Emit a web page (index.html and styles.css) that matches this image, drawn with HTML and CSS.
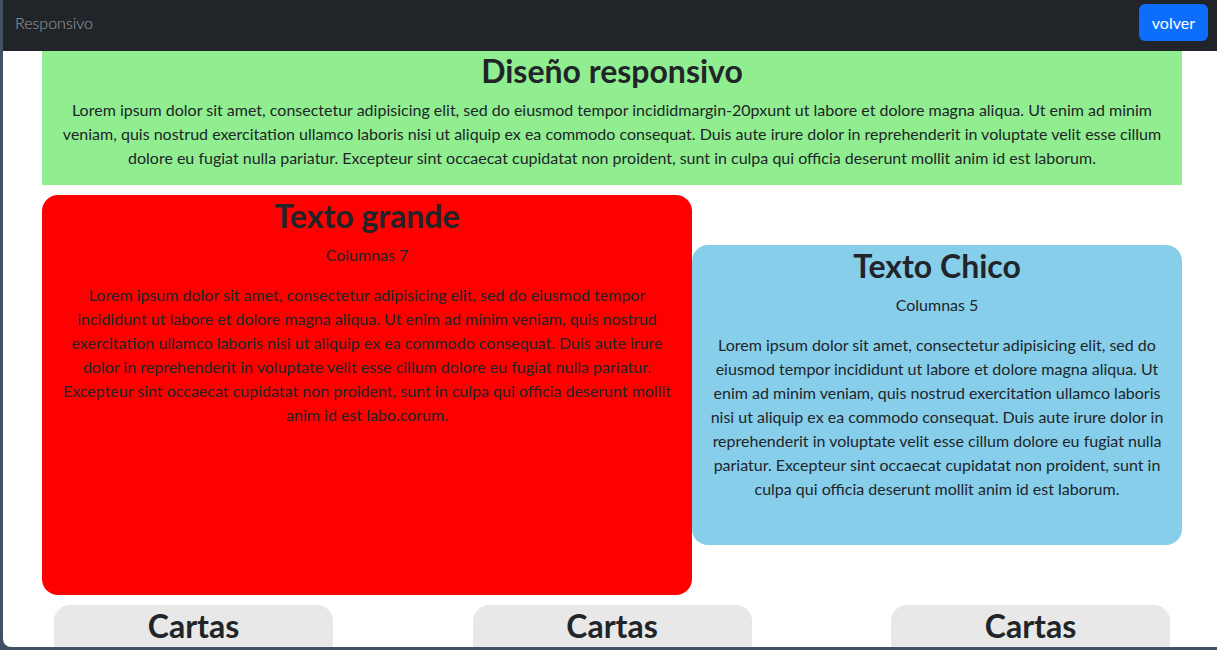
FILE: index.html
```html
<!DOCTYPE html>
<html lang="es">
<head>
    <meta charset="UTF-8">
    <meta name="viewport" content="width=device-width, initial-scale=1.0">
    <title>Responsivo</title>
    <link rel="stylesheet" href="styles.css">
</head>
<body>
    <div class="frame">
        <div class="page">
            <nav class="navbar">
                <span class="brand">Responsivo</span>
                <button class="btn-volver">volver</button>
            </nav>

            <div class="container">
                <section class="intro">
                    <h2>Diseño responsivo</h2>
                    <p>Lorem ipsum dolor sit amet, consectetur adipisicing elit, sed do eiusmod tempor incididmargin-20pxunt ut labore et dolore magna aliqua. Ut enim ad minim veniam, quis nostrud exercitation ullamco laboris nisi ut aliquip ex ea commodo consequat. Duis aute irure dolor in reprehenderit in voluptate velit esse cillum dolore eu fugiat nulla pariatur. Excepteur sint occaecat cupidatat non proident, sunt in culpa qui officia deserunt mollit anim id est laborum.</p>
                </section>

                <div class="fila">
                    <div class="caja grande">
                        <h2>Texto grande</h2>
                        <p>Columnas 7</p>
                        <p>Lorem ipsum dolor sit amet, consectetur adipisicing elit, sed do eiusmod tempor incididunt ut labore et dolore magna aliqua. Ut enim ad minim veniam, quis nostrud exercitation ullamco laboris nisi ut aliquip ex ea commodo consequat. Duis aute irure dolor in reprehenderit in voluptate velit esse cillum dolore eu fugiat nulla pariatur. Excepteur sint occaecat cupidatat non proident, sunt in culpa qui officia deserunt mollit anim id est labo.corum.</p>
                    </div>
                    <div class="caja chico">
                        <h2>Texto Chico</h2>
                        <p>Columnas 5</p>
                        <p>Lorem ipsum dolor sit amet, consectetur adipisicing elit, sed do eiusmod tempor incididunt ut labore et dolore magna aliqua. Ut enim ad minim veniam, quis nostrud exercitation ullamco laboris nisi ut aliquip ex ea commodo consequat. Duis aute irure dolor in reprehenderit in voluptate velit esse cillum dolore eu fugiat nulla pariatur. Excepteur sint occaecat cupidatat non proident, sunt in culpa qui officia deserunt mollit anim id est laborum.</p>
                    </div>
                </div>

                <div class="cartas">
                    <div class="carta">
                        <h2>Cartas</h2>
                        <p>Lorem ipsum dolor sit amet, consectetur adipisicing elit.</p>
                    </div>
                    <div class="carta">
                        <h2>Cartas</h2>
                        <p>Lorem ipsum dolor sit amet, consectetur adipisicing elit.</p>
                    </div>
                    <div class="carta">
                        <h2>Cartas</h2>
                        <p>Lorem ipsum dolor sit amet, consectetur adipisicing elit.</p>
                    </div>
                </div>
            </div>
        </div>
    </div>
</body>
</html>
```

FILE: styles.css
```css
* {
    box-sizing: border-box;
}
body {
    margin: 0;
    font-family: Lato, "Open Sans", sans-serif;
    font-size: 16px;
    line-height: 1.5;
    color: #212529;
    background-color: #434f63;
    overflow: hidden;
    height: 650px;
}
.frame {
    padding-left: 3px;
    width: 1217px;
}
.page {
    width: 1218px;
    height: 647px;
    background-color: #fff;
    border-bottom-left-radius: 8px;
    overflow: hidden;
}
h2 {
    font-size: 32px;
    font-weight: 700;
    line-height: 1.2;
    margin: 0 0 8px;
}
p {
    margin: 0 0 16px;
}
.navbar {
    height: 51px;
    background-color: #212529;
    display: flex;
    justify-content: space-between;
    align-items: flex-start;
    padding: 4px 13px 0 12px;
}
.brand {
    color: rgba(255, 255, 255, 0.55);
    font-weight: 300;
    margin-top: 7px;
}
.btn-volver {
    font-family: inherit;
    font-size: 16px;
    line-height: 1.5;
    color: #fff;
    background-color: #0d6efd;
    border: none;
    border-radius: 6px;
    padding: 6px 13px;
    height: 37px;
    cursor: pointer;
}
.container {
    width: 1140px;
    margin: 0 auto;
    text-align: center;
}
.intro {
    display: flow-root;
    background-color: #90ee90;
    padding: 1px 12px 0;
    height: 134px;
}
.fila {
    display: flex;
    align-items: center;
    margin-top: 10px;
}
.caja {
    display: flow-root;
    border-radius: 16px;
    padding-top: 2px;
}
.grande {
    width: 650px;
    height: 400px;
    background-color: #ff0000;
    padding-left: 10.5px;
    padding-right: 10.5px;
}
.chico {
    width: 490px;
    height: 300px;
    background-color: #87ceeb;
    padding-left: 17px;
    padding-right: 17px;
}
.cartas {
    display: flex;
    justify-content: space-between;
    padding: 0 12px;
    margin-top: 10px;
}
.carta {
    width: 25%;
    min-height: 200px;
    background-color: #e8e8e8;
    border-radius: 16px;
    padding: 2px 10px 0;
}
```
